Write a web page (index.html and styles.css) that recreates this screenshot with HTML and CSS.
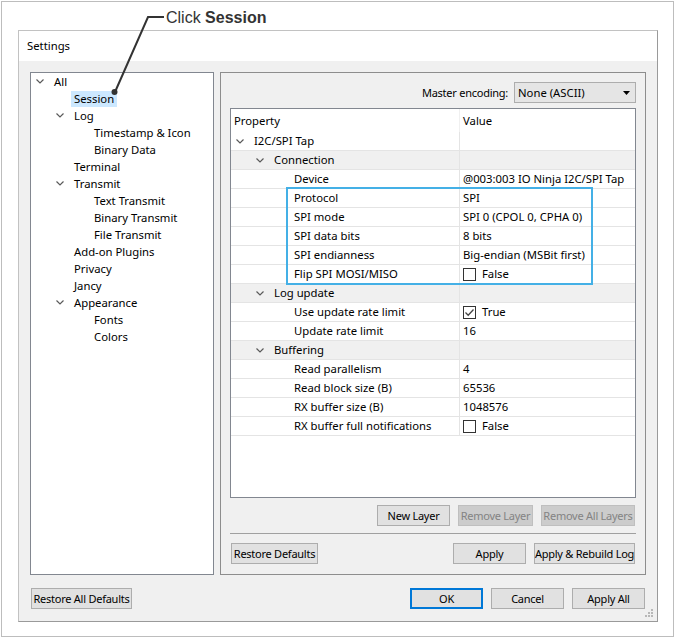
FILE: index.html
```html
<!DOCTYPE html>
<html>
<head>
<meta charset="utf-8">
<title>Settings</title>
<link rel="stylesheet" href="styles.css">
</head>
<body>
<div class="frame">
  <div class="callout-head">Click <b>Session</b></div>
  <svg class="callout-line" width="180" height="100" viewBox="0 0 180 100">
    <polyline points="164,17 148,17 115,92" fill="none" stroke="#333" stroke-width="2"/>
    <circle cx="114.5" cy="92" r="3" fill="#333"/>
  </svg>
  <div class="dialog">
    <div class="titlebar">Settings</div>
    <div class="body">
      <div class="panels">
        <div class="tree">
          <div class="titem l0"><svg class="tw" width="8" height="5" viewBox="0 0 8 5"><path d="M0.5 0.5 L4 4 L7.5 0.5"/></svg><span>All</span></div>
          <div class="titem l1"><span class="sel">Session</span></div>
          <div class="titem l1"><svg class="tw" width="8" height="5" viewBox="0 0 8 5"><path d="M0.5 0.5 L4 4 L7.5 0.5"/></svg><span>Log</span></div>
          <div class="titem l2"><span>Timestamp &amp; Icon</span></div>
          <div class="titem l2"><span>Binary Data</span></div>
          <div class="titem l1"><span>Terminal</span></div>
          <div class="titem l1"><svg class="tw" width="8" height="5" viewBox="0 0 8 5"><path d="M0.5 0.5 L4 4 L7.5 0.5"/></svg><span>Transmit</span></div>
          <div class="titem l2"><span>Text Transmit</span></div>
          <div class="titem l2"><span>Binary Transmit</span></div>
          <div class="titem l2"><span>File Transmit</span></div>
          <div class="titem l1"><span>Add-on Plugins</span></div>
          <div class="titem l1"><span>Privacy</span></div>
          <div class="titem l1"><span>Jancy</span></div>
          <div class="titem l1"><svg class="tw" width="8" height="5" viewBox="0 0 8 5"><path d="M0.5 0.5 L4 4 L7.5 0.5"/></svg><span>Appearance</span></div>
          <div class="titem l2"><span>Fonts</span></div>
          <div class="titem l2"><span>Colors</span></div>
        </div>
        <div class="page">
          <div class="enc-row">
            <span class="enc-label">Master encoding:</span>
            <div class="combo"><span>None (ASCII)</span><svg class="arrow" width="7" height="4" viewBox="0 0 7 4"><path d="M0 0 H7 L3.5 4 Z"/></svg></div>
          </div>
          <div class="grid">
            <div class="ghead"><div class="pcol">Property</div><div class="vcol">Value</div></div>
            <div class="grow"><div class="pcol l0"><svg class="tw" width="8" height="5" viewBox="0 0 8 5"><path d="M0.5 0.5 L4 4 L7.5 0.5"/></svg>I2C/SPI Tap</div><div class="vcol"></div></div>
            <div class="grow cat"><div class="pcol l1"><svg class="tw" width="8" height="5" viewBox="0 0 8 5"><path d="M0.5 0.5 L4 4 L7.5 0.5"/></svg>Connection</div><div class="vcol"></div></div>
            <div class="grow"><div class="pcol l2">Device</div><div class="vcol">@003:003 IO Ninja I2C/SPI Tap</div></div>
            <div class="grow"><div class="pcol l2">Protocol</div><div class="vcol">SPI</div></div>
            <div class="grow"><div class="pcol l2">SPI mode</div><div class="vcol">SPI 0 (CPOL 0, CPHA 0)</div></div>
            <div class="grow"><div class="pcol l2">SPI data bits</div><div class="vcol">8 bits</div></div>
            <div class="grow"><div class="pcol l2">SPI endianness</div><div class="vcol">Big-endian (MSBit first)</div></div>
            <div class="grow"><div class="pcol l2">Flip SPI MOSI/MISO</div><div class="vcol"><span class="cb"></span>False</div></div>
            <div class="grow cat"><div class="pcol l1"><svg class="tw" width="8" height="5" viewBox="0 0 8 5"><path d="M0.5 0.5 L4 4 L7.5 0.5"/></svg>Log update</div><div class="vcol"></div></div>
            <div class="grow"><div class="pcol l2">Use update rate limit</div><div class="vcol"><span class="cb"><svg width="11" height="11" viewBox="0 0 11 11"><path d="M1.5 5.5 L4.2 8.2 L9.5 2.5"/></svg></span>True</div></div>
            <div class="grow"><div class="pcol l2">Update rate limit</div><div class="vcol">16</div></div>
            <div class="grow cat"><div class="pcol l1"><svg class="tw" width="8" height="5" viewBox="0 0 8 5"><path d="M0.5 0.5 L4 4 L7.5 0.5"/></svg>Buffering</div><div class="vcol"></div></div>
            <div class="grow"><div class="pcol l2">Read parallelism</div><div class="vcol">4</div></div>
            <div class="grow"><div class="pcol l2">Read block size (B)</div><div class="vcol">65536</div></div>
            <div class="grow"><div class="pcol l2">RX buffer size (B)</div><div class="vcol">1048576</div></div>
            <div class="grow"><div class="pcol l2">RX buffer full notifications</div><div class="vcol"><span class="cb"></span>False</div></div>
            <div class="highlight"></div>
          </div>
          <div class="btn-row">
            <div class="btn w73">New Layer</div>
            <div class="btn dis w75">Remove Layer</div>
            <div class="btn dis w94">Remove All Layers</div>
          </div>
          <div class="sep"></div>
          <div class="btn-row2">
            <div class="btn w87">Restore Defaults</div>
            <div class="spacer"></div>
            <div class="btn w73">Apply</div>
            <div class="btn w101">Apply &amp; Rebuild Log</div>
          </div>
        </div>
      </div>
      <div class="footer">
        <div class="btn w101">Restore All Defaults</div>
        <div class="spacer"></div>
        <div class="btn w73 default">OK</div>
        <div class="btn w73">Cancel</div>
        <div class="btn w73">Apply All</div>
      </div>
    </div>
    <svg class="grip" width="10" height="10" viewBox="0 0 10 10">
      <rect x="7" y="1" width="2" height="2"/>
      <rect x="4" y="4" width="2" height="2"/>
      <rect x="7" y="4" width="2" height="2"/>
      <rect x="1" y="7" width="2" height="2"/>
      <rect x="4" y="7" width="2" height="2"/>
      <rect x="7" y="7" width="2" height="2"/>
    </svg>
  </div>
</div>
</body>
</html>
```
FILE: styles.css
```css
* { box-sizing: border-box; }
body {
  margin: 0;
  background: #fff;
  font-family: "Noto Sans", "Open Sans", sans-serif;
  font-size: 11.3px;
  color: #000;
}
.frame {
  position: relative;
  margin: 1px 0 0 1px;
  width: 673px;
  height: 636px;
  border: 1px solid #bdbdbd;
}
.callout-head {
  height: 28px;
  padding: 7px 0 0 164px;
  font: 16px/18px "Liberation Sans", Arial, sans-serif;
  color: #333;
}
.callout-line {
  position: absolute;
  left: -2px;
  top: -2px;
  z-index: 5;
}
.dialog {
  position: relative;
  margin-left: 16px;
  width: 640px;
  height: 592px;
  border: 1px solid;
  border-color: #c2c2c2 #9a9a9a #9a9a9a #c2c2c2;
  background: #f0f0f0;
  display: flex;
  flex-direction: column;
}
.titlebar {
  height: 30px;
  background: #fff;
  padding-left: 8px;
  line-height: 30px;
}
.body {
  flex: 1;
  padding: 11px 11px 0 11px;
}
.panels {
  display: flex;
  gap: 6px;
  height: 503px;
}
.tree {
  width: 184px;
  border: 1px solid #828790;
  background: #fff;
}
.titem {
  height: 17px;
  line-height: 17px;
  display: flex;
  align-items: center;
  white-space: nowrap;
}
.titem.l0 { padding-left: 23px; }
.titem.l1 { padding-left: 43px; }
.titem.l2 { padding-left: 63px; }
.tw {
  flex: none;
  margin-left: -18px;
  margin-right: 10px;
  fill: none;
  stroke: #5a5a5a;
  stroke-width: 1.2;
}
.sel {
  background: #cce8ff;
  line-height: 16px;
  height: 16px;
  margin-top: 1px;
  padding: 0 3px;
  margin-left: -3px;
}
.page {
  flex: 1;
  border: 1px solid #8d8d8d;
  padding: 9px 9px 10px 9px;
  display: flex;
  flex-direction: column;
}
.enc-row {
  display: flex;
  justify-content: flex-end;
  align-items: center;
  gap: 6px;
  height: 21px;
}
.enc-label {
  font-size: 11px;
  letter-spacing: -0.25px;
}
.combo {
  width: 122px;
  height: 21px;
  border: 1px solid #adadad;
  background: #e5e5e5;
  padding-left: 3px;
  padding-right: 5px;
  display: flex;
  align-items: center;
  justify-content: space-between;
}
.arrow { fill: #000; }
.grid {
  position: relative;
  margin-top: 5px;
  height: 390px;
  border: 1px solid #828790;
  background: #fff;
}
.ghead {
  display: flex;
  height: 23px;
  line-height: 23px;
}
.grow {
  display: flex;
  height: 19px;
  line-height: 18px;
  border-bottom: 1px solid #e4e4e4;
  white-space: nowrap;
}
.grow.cat { background: #f0f0f0; }
.pcol {
  width: 228px;
  flex: none;
  display: flex;
  align-items: center;
  padding-left: 3px;
}
.vcol {
  flex: 1;
  display: flex;
  align-items: center;
  border-left: 1px solid #e4e4e4;
  padding-left: 3px;
}
.ghead .vcol { border-left-color: #f0f0f0; }
.pcol.l0 { padding-left: 23px; }
.pcol.l1 { padding-left: 43px; }
.pcol.l2 { padding-left: 63px; }
.cb {
  width: 13px;
  height: 13px;
  border: 1px solid #333;
  background: #fff;
  margin-right: 6px;
  display: flex;
  align-items: center;
  justify-content: center;
}
.cb svg {
  fill: none;
  stroke: #444;
  stroke-width: 1.3;
}
.highlight {
  position: absolute;
  left: 55px;
  top: 78px;
  width: 307px;
  height: 98px;
  border: 2px solid #44b0e6;
}
.btn {
  height: 21px;
  border: 1px solid #adadad;
  background: #e1e1e1;
  text-align: center;
  line-height: 19px;
  white-space: nowrap;
  flex: none;
  font-size: 11px;
  letter-spacing: -0.25px;
  display: flex;
  justify-content: center;
}
.btn.dis {
  background: #cccccc;
  border-color: #bfbfbf;
  color: #838383;
}
.btn.default {
  border: 2px solid #0078d7;
  line-height: 17px;
}
.w73 { width: 73px; }
.w75 { width: 75px; }
.w87 { width: 87px; }
.w94 { width: 94px; }
.w101 { width: 101px; }
.btn-row {
  display: flex;
  justify-content: flex-end;
  gap: 8px;
  margin-top: 7px;
  padding-right: 1px;
}
.sep {
  height: 1px;
  background: #a0a0a0;
  margin-top: 7px;
}
.btn-row2 {
  display: flex;
  gap: 8px;
  margin-top: 9px;
  padding: 0 1px;
}
.spacer { flex: 1; }
.footer {
  display: flex;
  gap: 8px;
  margin-top: 13px;
  padding: 0 1px;
}
.grip {
  position: absolute;
  right: 3px;
  bottom: 3px;
  fill: #b8b8b8;
}
```
